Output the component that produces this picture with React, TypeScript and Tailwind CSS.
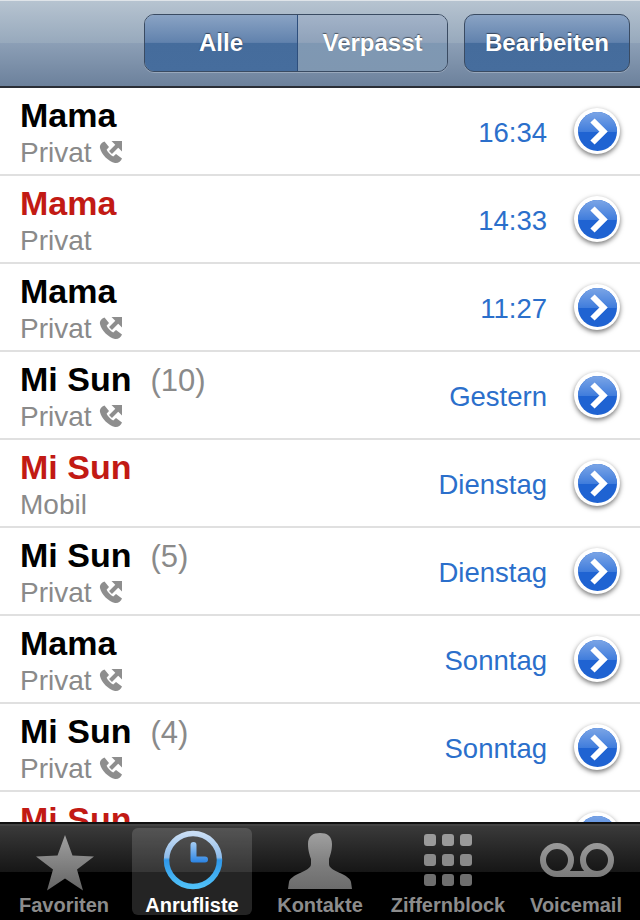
import React from "react";

type Call = {
  name: string;
  count?: string;
  missed?: boolean;
  type?: string;
  when?: string;
  outgoing?: boolean;
};

const calls: Call[] = [
  { name: "Mama", type: "Privat", when: "16:34", outgoing: true },
  { name: "Mama", type: "Privat", when: "14:33", missed: true },
  { name: "Mama", type: "Privat", when: "11:27", outgoing: true },
  { name: "Mi Sun", count: "(10)", type: "Privat", when: "Gestern", outgoing: true },
  { name: "Mi Sun", type: "Mobil", when: "Dienstag", missed: true },
  { name: "Mi Sun", count: "(5)", type: "Privat", when: "Dienstag", outgoing: true },
  { name: "Mama", type: "Privat", when: "Sonntag", outgoing: true },
  { name: "Mi Sun", count: "(4)", type: "Privat", when: "Sonntag", outgoing: true },
  { name: "Mi Sun", missed: true },
];

const OutgoingIcon = () => (
  <svg width="24" height="24" viewBox="0 0 24 24" className="ml-[7px] mt-[-2px]">
    <path
      d="M5.5 1.5 C2.5 2.5 0.5 5 1 8 C2.5 14.5 9.5 21.5 16 23 C19 23.5 22 21.5 23 18.5 L17 14 L14.2 16.4 C11.5 15.1 8.9 12.5 7.6 9.8 L10 7 Z"
      fill="#8e8e8e"
    />
    <path d="M11.5 12.5 L18.5 5.5" stroke="#8e8e8e" strokeWidth="4" fill="none" />
    <path d="M12.5 1 L23 1 L23 11.5 Z" fill="#8e8e8e" />
  </svg>
);

const DisclosureButton = () => (
  <div className="flex h-[46px] w-[46px] shrink-0 items-center justify-center rounded-full bg-white shadow-[0_2px_5px_rgba(0,0,0,0.55)]">
    <div className="relative h-[39px] w-[39px] overflow-hidden rounded-full bg-[#1f63d2]">
      <div className="absolute left-0 right-0 top-0 h-[20px] bg-gradient-to-b from-[#7ba5e6] to-[#3f7cdc]" />
      <svg width="39" height="39" viewBox="0 0 39 39" className="absolute left-0 top-0">
        <path d="M14.5 8.5 L25.5 19.5 L14.5 30.5" stroke="#fff" strokeWidth="6" fill="none" />
      </svg>
    </div>
  </div>
);

const CallRow = ({ call }: { call: Call }) => (
  <div className="flex h-[88px] shrink-0 items-start border-b-2 border-[#e0e0e0] bg-white pl-[20px] pr-[20px] pt-[8px]">
    <div className="min-w-0 flex-1">
      <div className="flex h-[38px] items-baseline leading-[38px]">
        <span className={`text-[34px] font-bold ${call.missed ? "text-[#c21a14]" : "text-black"}`}>{call.name}</span>
        {call.count && <span className="ml-[19px] text-[31px] text-[#8a8a8a]">{call.count}</span>}
      </div>
      {call.type && (
        <div className="mt-[3px] flex items-center text-[28px] leading-[32px] text-[#8a8a8a]">
          {call.type}
          {call.outgoing && <OutgoingIcon />}
        </div>
      )}
    </div>
    {call.when && <span className="mr-[27px] mt-[21px] text-[27.5px] leading-[32px] text-[#2b6fcb]">{call.when}</span>}
    <div className="mt-[12px]">
      <DisclosureButton />
    </div>
  </div>
);

const StarIcon = () => (
  <svg width="58" height="56" viewBox="0 0 58 56" className="ml-[1px] mt-[5px]">
    <defs>
      <linearGradient id="tabGray" x1="0" y1="0" x2="0" y2="1">
        <stop offset="0" stopColor="#a0a0a0" />
        <stop offset="0.6" stopColor="#7c7c7c" />
        <stop offset="1" stopColor="#646464" />
      </linearGradient>
    </defs>
    <path d="M29 0 L36.5 20.5 L58 21.5 L41 34.5 L47 55.5 L29 43.5 L11 55.5 L17 34.5 L0 21.5 L21.5 20.5 Z" fill="url(#tabGray)" />
  </svg>
);

const ClockIcon = () => (
  <svg width="60" height="60" viewBox="0 0 60 60" className="ml-[2px]">
    <defs>
      <linearGradient id="clockRing" x1="0" y1="0" x2="0" y2="1">
        <stop offset="0" stopColor="#c9def5" />
        <stop offset="0.45" stopColor="#8fbcea" />
        <stop offset="0.5" stopColor="#2f98ea" />
        <stop offset="1" stopColor="#4fc0f8" />
      </linearGradient>
      <linearGradient id="clockHand" x1="0" y1="0" x2="0" y2="1">
        <stop offset="0" stopColor="#a5cdf3" />
        <stop offset="1" stopColor="#2b84e4" />
      </linearGradient>
    </defs>
    <circle cx="30" cy="30" r="26.5" fill="none" stroke="url(#clockRing)" strokeWidth="5.5" />
    <path d="M27.5 15 a3 3 0 0 1 6 0 V26.5 H42 a3 3 0 0 1 0 6 H30 a2.5 2.5 0 0 1 -2.5 -2.5 Z" fill="url(#clockHand)" />
  </svg>
);

const PersonIcon = () => (
  <svg width="64" height="56" viewBox="0 0 64 56" className="mt-[2px]">
    <defs>
      <linearGradient id="personGray" x1="0" y1="0" x2="0" y2="1">
        <stop offset="0" stopColor="#a0a0a0" />
        <stop offset="0.6" stopColor="#7c7c7c" />
        <stop offset="1" stopColor="#6c6c6c" />
      </linearGradient>
    </defs>
    <path
      d="M32 0 C39 0 44 3 44 11 C44 18 42 23 41 26 L41 31 C41 35 46 37 52 40 C58 43 62 45 63 49 L64 56 L0 56 L1 49 C2 45 6 43 12 40 C18 37 23 35 23 31 L23 26 C22 23 20 18 20 11 C20 3 25 0 32 0 Z"
      fill="url(#personGray)"
    />
  </svg>
);

const KeypadIcon = () => (
  <div className="grid grid-cols-[repeat(3,12px)] gap-x-[6px] gap-y-[8px]">
    {["a", "b", "c"].map((k) => (
      <div key={k} className="h-[12px] rounded-[3px] bg-[#9a9a9a]" />
    ))}
    {["d", "e", "f"].map((k) => (
      <div key={k} className="h-[12px] rounded-[3px] bg-[#8a8a8a]" />
    ))}
    {["g", "h", "i"].map((k) => (
      <div key={k} className="h-[12px] rounded-[3px] bg-[#6e6e6e]" />
    ))}
  </div>
);

const VoicemailIcon = () => (
  <svg width="74" height="34" viewBox="0 0 74 34" className="ml-[2px]">
    <defs>
      <linearGradient id="vmGray" gradientUnits="userSpaceOnUse" x1="0" y1="0" x2="0" y2="34">
        <stop offset="0" stopColor="#9a9a9a" />
        <stop offset="1" stopColor="#7a7a7a" />
      </linearGradient>
    </defs>
    <circle cx="17" cy="17" r="14" fill="none" stroke="url(#vmGray)" strokeWidth="6" />
    <circle cx="57" cy="17" r="14" fill="none" stroke="url(#vmGray)" strokeWidth="6" />
    <path d="M17 31 H57" stroke="url(#vmGray)" strokeWidth="6" />
  </svg>
);

const tabs = [
  { label: "Favoriten", icon: <StarIcon /> },
  { label: "Anrufliste", icon: <ClockIcon />, active: true },
  { label: "Kontakte", icon: <PersonIcon /> },
  { label: "Ziffernblock", icon: <KeypadIcon /> },
  { label: "Voicemail", icon: <VoicemailIcon /> },
];

export default function App() {
  return (
    <div className="flex h-[920px] w-[640px] flex-col overflow-hidden bg-white font-['Liberation_Sans',Arial,sans-serif]">
      {/* Nav bar */}
      <div className="flex h-[88px] shrink-0 items-start justify-end gap-[16px] border-b-2 border-[#2a2e36] bg-[linear-gradient(#b7c4d1,#97a9bc_50%,#8c9fb6_50%,#6c819c)] pr-[10px] pt-[14px] text-[24px] font-bold text-white shadow-[inset_0_1px_0_#dfe4e9] [text-shadow:0_-1px_1px_rgba(0,0,0,0.5)]">
        <div className="flex h-[58px] w-[304px] overflow-hidden rounded-[10px] border border-[#3a4b62] shadow-[0_1px_0_rgba(255,255,255,0.25)]">
          <div className="flex w-[153px] items-center justify-center border-r border-[#2d4e7c] bg-[linear-gradient(#8aa3c4,#6182ad_49%,#456c9c_50%,#466d9d)]">
            Alle
          </div>
          <div className="flex flex-1 items-center justify-center bg-[linear-gradient(#a3b3c8,#8fa2ba_49%,#7f98b3_50%,#7f97b1)]">
            Verpasst
          </div>
        </div>
        <div className="flex h-[58px] w-[166px] items-center justify-center rounded-[10px] border border-[#3a4b62] bg-[linear-gradient(#8aa3c4,#6182ad_49%,#456c9c_50%,#466d9d)] shadow-[0_1px_0_rgba(255,255,255,0.25)]">
          Bearbeiten
        </div>
      </div>

      {/* Call list */}
      <div className="flex min-h-0 flex-1 flex-col overflow-hidden">
        {calls.map((call, i) => (
          <CallRow key={i} call={call} />
        ))}
      </div>

      {/* Tab bar */}
      <div className="relative flex h-[98px] shrink-0 border-t-2 border-[#111] bg-black pt-[4px]">
        <div className="absolute left-0 right-0 top-0 h-[48px] border-t-2 border-[#444] bg-gradient-to-b from-[#3a3a3a] to-[#161616]" />
        {tabs.map((tab) => (
          <div
            key={tab.label}
            className={`relative mx-[4px] flex h-[87px] w-[120px] flex-col items-center rounded-[6px] ${tab.active ? "bg-white/[0.14] text-white" : "text-[#8c8c8c]"}`}
          >
            <div className="flex h-[64px] items-center justify-center">{tab.icon}</div>
            <span className="mt-[3px] whitespace-nowrap text-[20px] font-bold leading-[20px]">{tab.label}</span>
          </div>
        ))}
      </div>
    </div>
  );
}
